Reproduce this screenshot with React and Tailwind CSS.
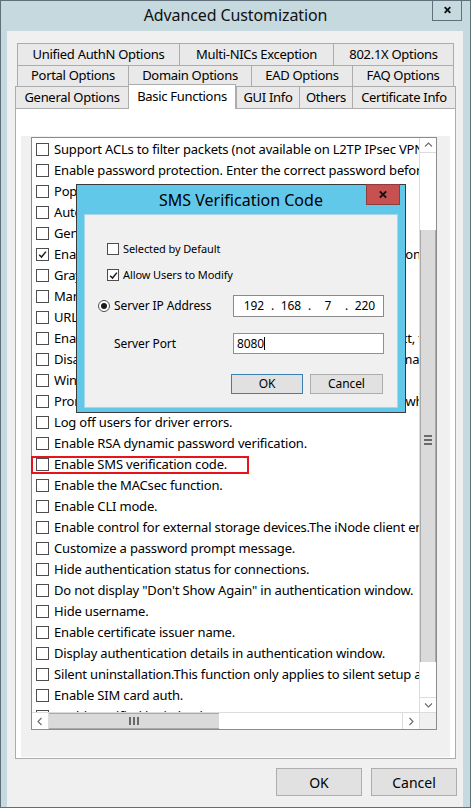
import React from 'react';

const Check = ({ checked, small }) => (
  <span
    className={`${small ? 'w-[12px] h-[12px]' : 'w-[13px] h-[13px]'} shrink-0 border border-[#4d4d4d] bg-white flex items-center justify-center`}
  >
    {checked && (
      <svg viewBox="0 0 10 10" className="w-[9px] h-[9px]">
        <path d="M1.3 5.3 L3.9 7.8 L8.8 1.8" fill="none" stroke="#1f1f1f" strokeWidth="1.7" />
      </svg>
    )}
  </span>
);

const Tab = ({ label, className = '', last }) => (
  <div
    className={`h-full flex items-center justify-center border-t border-l border-[#acacac] bg-[#e9e9e9] ${last ? 'border-r flex-1' : ''} ${className}`}
  >
    {label}
  </div>
);

const Chevron = ({ dir }) => {
  const d = {
    up: 'M1 5.5 L4.5 2 L8 5.5',
    down: 'M1 2.5 L4.5 6 L8 2.5',
    left: 'M5.5 1 L2 4.5 L5.5 8',
    right: 'M2.5 1 L6 4.5 L2.5 8',
  }[dir];
  return (
    <svg viewBox="0 0 9 9" className="w-[9px] h-[9px]">
      <path d={d} fill="none" stroke="#6a6a6a" strokeWidth="1.1" />
    </svg>
  );
};

const items = [
  { t: 'Support ACLs to filter packets (not available on L2TP IPsec VPN connections).' },
  { t: 'Enable password protection. Enter the correct password before uninstalling the client.' },
  { t: 'Pop up the login window after startup.' },
  { t: 'Automatically connect after startup.' },
  { t: 'Generate client logs for troubleshooting.' },
  { t: 'Enable the iNode client to send a notification to the user upon failure.', checked: true },
  { t: 'Gray out the Disconnect button.' },
  { t: 'Manage the client with iNode Manager.' },
  { t: 'URL redirection for authentication.' },
  { t: 'Enable the client to reconnect automatically after disconnect, then notify.' },
  { t: 'Disable the client from checking updates and prevent automatic upgrade.' },
  { t: 'Window auto-hide after authentication.' },
  { t: 'Prompt users before client disconnects a network by policy when offline.' },
  { t: 'Log off users for driver errors.' },
  { t: 'Enable RSA dynamic password verification.' },
  { t: 'Enable SMS verification code.' },
  { t: 'Enable the MACsec function.' },
  { t: 'Enable CLI mode.' },
  { t: 'Enable control for external storage devices.The iNode client enforces the policy.' },
  { t: 'Customize a password prompt message.' },
  { t: 'Hide authentication status for connections.' },
  { t: 'Do not display "Don\'t Show Again" in authentication window.' },
  { t: 'Hide username.' },
  { t: 'Enable certificate issuer name.' },
  { t: 'Display authentication details in authentication window.' },
  { t: 'Silent uninstallation.This function only applies to silent setup and uninstall.' },
  { t: 'Enable SIM card auth.' },
  { t: 'Enable verified login by the 8.0 Manager.' },
];

function VScroll() {
  return (
    <div className="flex flex-col bg-white border-l border-[#dcdcdc]">
      <div className="h-[15px] flex items-center justify-center border-b border-[#dcdcdc]">
        <Chevron dir="up" />
      </div>
      <div className="h-[77px]" />
      <div className="h-[432px] bg-[#dadada] border-x border-[#a9a9a9] flex items-center justify-center">
        <div className="flex flex-col gap-[2px] -mt-[12px]">
          <span className="w-[8px] h-[2px] bg-[#6a6a6a]" />
          <span className="w-[8px] h-[2px] bg-[#6a6a6a]" />
          <span className="w-[8px] h-[2px] bg-[#6a6a6a]" />
        </div>
      </div>
      <div className="h-[35px]" />
      <div className="h-[15px] flex items-center justify-center border-t border-[#dcdcdc]">
        <Chevron dir="down" />
      </div>
    </div>
  );
}

function HScroll() {
  return (
    <div className="flex bg-white border-t border-[#dcdcdc]">
      <div className="w-[17px] flex items-center justify-center border-r border-[#dcdcdc]">
        <Chevron dir="left" />
      </div>
      <div className="w-[170px] bg-[#dadada] border-y border-[#a9a9a9] flex items-center justify-center">
        <div className="flex gap-[2px]">
          <span className="w-[2px] h-[8px] bg-[#6a6a6a]" />
          <span className="w-[2px] h-[8px] bg-[#6a6a6a]" />
          <span className="w-[2px] h-[8px] bg-[#6a6a6a]" />
        </div>
      </div>
      <div className="flex-1" />
      <div className="w-[17px] flex items-center justify-center border-l border-[#dcdcdc]">
        <Chevron dir="right" />
      </div>
    </div>
  );
}

function SmsDialog() {
  return (
    <div className="absolute left-[75px] top-[183px] w-[330px] h-[229px] border border-[#3a3a3a] bg-[#62c8e9] text-black">
      <div className="h-[29px] relative flex items-center justify-center text-[16px] pt-[1px]">
        SMS Verification Code
        <div className="absolute right-[5px] -top-px w-[34px] h-[21px] bg-[#c75050] border border-[#8f3c3c] flex items-center justify-center">
          <svg viewBox="0 0 10 10" className="w-[10px] h-[9px]">
            <path d="M1.5 1.5 L8.5 8.5 M8.5 1.5 L1.5 8.5" stroke="#111" strokeWidth="2.2" />
          </svg>
        </div>
      </div>
      <div className="ml-[7px] w-[314px] h-[194px] bg-[#f0f0f0] border border-[#a6d7e8] flex flex-col text-[11px] tracking-[-0.1px] pt-[28px]">
        <div className="h-[12px] flex items-center pl-[22px] gap-[4px]">
          <Check small />
          <span>Selected by Default</span>
        </div>
        <div className="h-[12px] mt-[14px] flex items-center pl-[22px] gap-[4px]">
          <Check small checked />
          <span>Allow Users to Modify</span>
        </div>
        <div className="h-[22px] mt-[14px] flex items-center">
          <div className="w-[148px] flex items-center pl-[13px] gap-[4px]">
            <span className="w-[12px] h-[12px] rounded-full border border-[#4d4d4d] bg-white flex items-center justify-center">
              <span className="w-[6px] h-[6px] rounded-full bg-[#1a1a1a]" />
            </span>
            <span className="text-[12px]">Server IP Address</span>
          </div>
          <div className="w-[151px] h-[22px] border border-[#8a8a8a] bg-white flex items-center pl-[5px] text-[12px]">
            <span className="w-[30px] text-center">192</span>
            <span className="w-[7px] text-center">.</span>
            <span className="w-[30px] text-center">168</span>
            <span className="w-[7px] text-center">.</span>
            <span className="w-[30px] text-center">7</span>
            <span className="w-[7px] text-center">.</span>
            <span className="w-[30px] text-center">220</span>
          </div>
        </div>
        <div className="h-[21px] mt-[16px] flex items-center">
          <div className="w-[148px] pl-[29px] text-[12px]">Server Port</div>
          <div className="w-[151px] h-[21px] border border-[#569de5] bg-white flex items-center pl-[3px] text-[12px]">
            <span>8080</span>
            <span className="w-px h-[13px] bg-black" />
          </div>
        </div>
        <div className="h-[20px] mt-[20px] flex pl-[146px] gap-[7px] text-[12px]">
          <div className="w-[72px] h-full border border-[#3c7fb1] bg-[#e1e1e1] flex items-center justify-center">OK</div>
          <div className="w-[73px] h-full border border-[#adadad] bg-[#e1e1e1] flex items-center justify-center">Cancel</div>
        </div>
      </div>
    </div>
  );
}

export default function App() {
  return (
    <div className="relative w-[471px] h-[808px] bg-[#c5d9df] border border-[#60707a] flex flex-col overflow-hidden font-['Noto_Sans',sans-serif] text-black">
      {/* title bar */}
      <div className="h-[30px] shrink-0 flex items-start px-[8px]">
        <div className="w-[30px]" />
        <div className="flex-1 text-center leading-[29px] text-[16px] tracking-[-0.1px] text-[#111]">Advanced Customization</div>
        <div className="w-[30px] h-[21px] -mt-px border-x border-b border-[#60707a] flex items-center justify-center">
          <svg viewBox="0 0 10 10" className="w-[9px] h-[8px]">
            <path d="M1.5 1.5 L8.5 8.5 M8.5 1.5 L1.5 8.5" stroke="#111" strokeWidth="2.3" />
          </svg>
        </div>
      </div>

      {/* client area */}
      <div className="ml-[6px] w-[456px] flex-1 bg-[#f0f0f0] flex flex-col pt-[12px]">
        <div className="text-[13px] tracking-[-0.3px]">
          <div className="ml-[10px] w-[437px] h-[22px] flex">
            <Tab label="Unified AuthN Options" className="w-[162px]" />
            <Tab label="Multi-NICs Exception" className="w-[154px]" />
            <Tab label="802.1X Options" last />
          </div>
          <div className="ml-[10px] w-[437px] h-[21px] flex">
            <Tab label="Portal Options" className="w-[111px]" />
            <Tab label="Domain Options" className="w-[123px]" />
            <Tab label="EAD Options" className="w-[101px]" />
            <Tab label="FAQ Options" last />
          </div>
          <div className="ml-[8px] w-[441px] h-[22px] flex items-end">
            <Tab label="General Options" className="w-[113px]" />
            <div className="relative z-10 -mb-px w-[108px] h-[25px] bg-white border-t border-x border-[#acacac] flex justify-center pt-[2px]">
              Basic Functions
            </div>
            <Tab label="GUI Info" className="w-[63px]" />
            <Tab label="Others" className="w-[53px]" />
            <Tab label="Certificate Info" last />
          </div>
        </div>

        {/* tab page */}
        <div className="ml-[8px] w-[441px] h-[651px] bg-white border border-[#acacac]">
          <div className="ml-[5px] mt-[27px] w-[429px] h-[621px] bg-[#f0f0f0] pt-px pl-[10px]">
            <div className="w-[406px] h-[593px] border border-[#8c8c8c] bg-white grid grid-cols-[387px_17px] grid-rows-[574px_17px]">
              <div className="overflow-hidden pt-px">
                {items.map((it, i) => (
                  <div key={i} className="h-[21px] flex items-center pl-[4px] gap-[5px] whitespace-nowrap text-[13px] tracking-[-0.18px]">
                    <Check checked={it.checked} />
                    <span>{it.t}</span>
                  </div>
                ))}
              </div>
              <VScroll />
              <HScroll />
              <div className="bg-[#f0f0f0] border-t border-l border-[#dcdcdc]" />
            </div>
          </div>
        </div>

        {/* buttons */}
        <div className="mt-[9px] flex justify-end pr-[6px] gap-[9px] text-[14px]">
          <div className="w-[86px] h-[28px] border border-[#adadad] bg-[#e1e1e1] flex items-center justify-center">OK</div>
          <div className="w-[86px] h-[28px] border border-[#adadad] bg-[#e1e1e1] flex items-center justify-center">Cancel</div>
        </div>
      </div>

      {/* annotation */}
      <div className="absolute left-[30px] top-[455px] w-[218px] h-[18px] border-2 border-[#e8141b]" />

      <SmsDialog />
    </div>
  );
}
